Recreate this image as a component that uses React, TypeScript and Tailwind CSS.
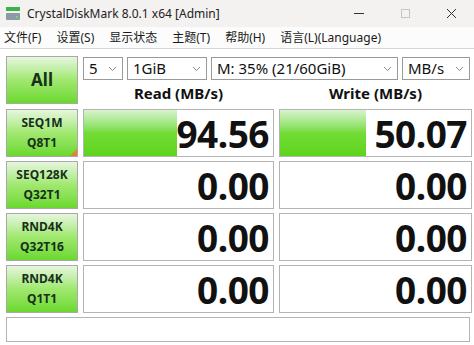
import React from 'react';

const ROWS = [
  { a: 'SEQ1M', b: 'Q8T1', read: '94.56', write: '50.07', rp: 49, wp: 45, mark: true },
  { a: 'SEQ128K', b: 'Q32T1', read: '0.00', write: '0.00', rp: 0, wp: 0 },
  { a: 'RND4K', b: 'Q32T16', read: '0.00', write: '0.00', rp: 0, wp: 0 },
  { a: 'RND4K', b: 'Q1T1', read: '0.00', write: '0.00', rp: 0, wp: 0 },
];

const MENU = ['文件(F)', '设置(S)', '显示状态', '主题(T)', '帮助(H)', '语言(L)(Language)'];

function Chevron() {
  return (
    <svg width="9" height="6" viewBox="0 0 9 6" className="shrink-0">
      <path d="M1 1l3.5 3.5L8 1" fill="none" stroke="#8a8a8a" strokeWidth="1" />
    </svg>
  );
}

function Select({ label, w }: { label: string; w: string }) {
  return (
    <div className={`${w} h-[23px] border border-[#9a9a9a] bg-white flex items-center justify-between pl-[5px] pr-[5px] text-[15px] text-[#111]`}>
      <span>{label}</span>
      <Chevron />
    </div>
  );
}

function TestButton({ a, b, mark, big }: { a: string; b?: string; mark?: boolean; big?: boolean }) {
  return (
    <div className={`relative h-full border border-[#a9a9a9] bg-gradient-to-b from-[#e6f6de] via-[#a0e86e] to-[#6ad92a] flex flex-col items-center justify-center leading-[20px] ${big ? 'text-[17px]' : 'text-[12px]'} font-bold text-[#18301a]`}>
      <span>{a}</span>
      {b && <span>{b}</span>}
      {mark && (
        <span className="absolute right-0 bottom-0 w-0 h-0 border-l-[7px] border-l-transparent border-b-[7px] border-b-[#e8822a]" />
      )}
    </div>
  );
}

function Meter({ value, pct }: { value: string; pct: number }) {
  return (
    <div className="relative h-full border border-[#b4b4b4] bg-white overflow-hidden">
      {pct > 0 && (
        <div
          className="absolute left-0 top-0 bottom-0 bg-gradient-to-b from-[#d8f2cc] via-[#72dc34] to-[#5ed41c]"
          style={{ width: `${pct}%` }}
        />
      )}
      <div className="relative h-full flex items-center justify-end pr-[4px] text-[37px] font-bold text-[#111] leading-none tracking-[-0.5px]">
        {value}
      </div>
    </div>
  );
}

export default function App() {
  return (
    <div className="w-[474px] h-[345px] bg-white overflow-hidden" style={{ fontFamily: '"Noto Sans", "Noto Sans CJK SC", sans-serif' }}>
      {/* title bar */}
      <div className="h-[27px] bg-[#f4f1f1] flex items-center">
        <div className="ml-[6px] w-[14px] h-[13px] flex flex-col justify-between">
          <div className="h-[4px] bg-[#3cb24a]" />
          <div className="h-[7px] bg-[#8b9aa4] rounded-[1px] flex items-center justify-end pr-[2px]">
            <div className="w-[2px] h-[2px] bg-[#6fe05a]" />
          </div>
        </div>
        <span className="ml-[7px] text-[12px] text-[#222]">CrystalDiskMark 8.0.1 x64 [Admin]</span>
        <div className="ml-auto flex items-center h-full">
          <div className="w-[46px] flex justify-center"><div className="w-[10px] h-[1px] bg-[#333]" /></div>
          <div className="w-[46px] flex justify-center"><div className="w-[9px] h-[9px] border border-[#c4c4c4]" /></div>
          <div className="w-[46px] flex justify-center">
            <svg width="11" height="11" viewBox="0 0 11 11"><path d="M1 1l9 9M10 1l-9 9" stroke="#333" strokeWidth="1" /></svg>
          </div>
        </div>
      </div>
      {/* menu */}
      <div className="h-[22px] flex items-center gap-[15px] pl-[4px] pt-[1px] text-[12px] text-[#1a1a1a] border-b border-[#d6d6d6] bg-[#fcfcfc]">
        {MENU.map((m) => <span key={m}>{m}</span>)}
      </div>

      <div className="pl-[6px] pr-[4px] pt-[7px]">
        <div className="grid grid-cols-[72px_191px_193px] gap-x-[5px] gap-y-[4px]">
          <div className="h-[49px] pb-[1px]">
            <TestButton a="All" big />
          </div>
          <div className="col-span-2 flex flex-col">
            <div className="flex gap-[4px] pt-[1px]">
              <Select label="5" w="w-[40px]" />
              <Select label="1GiB" w="w-[80px]" />
              <Select label="M: 35% (21/60GiB)" w="w-[187px]" />
              <Select label="MB/s" w="w-[68px]" />
            </div>
            <div className="flex flex-1 items-center text-[15px] font-bold text-[#111] pt-[1px]">
              <div className="w-[191px] text-center">Read (MB/s)</div>
              <div className="w-[5px]" />
              <div className="w-[193px] text-center">Write (MB/s)</div>
            </div>
          </div>
          {ROWS.map((r, i) => (
            <React.Fragment key={i}>
              <div className="h-[48px]"><TestButton a={r.a} b={r.b} mark={r.mark} /></div>
              <div className="h-[48px]"><Meter value={r.read} pct={r.rp} /></div>
              <div className="h-[48px]"><Meter value={r.write} pct={r.wp} /></div>
            </React.Fragment>
          ))}
        </div>
        <div className="mt-[4px] h-[25px] w-[464px] border border-[#b4b4b4] bg-white" />
      </div>
    </div>
  );
}
